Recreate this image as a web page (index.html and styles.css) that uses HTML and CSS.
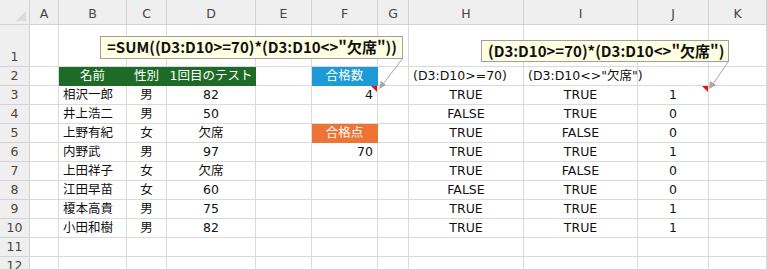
FILE: index.html
```html
<!DOCTYPE html>
<html lang="ja">
<head>
    <meta charset="UTF-8">
    <title>合格数の集計</title>
    <link rel="stylesheet" href="styles.css">
</head>
<body>
    <div class="sheet">
        <!-- column headers -->
        <div class="cell corner"></div>
        <div class="cell col">A</div>
        <div class="cell col">B</div>
        <div class="cell col">C</div>
        <div class="cell col">D</div>
        <div class="cell col">E</div>
        <div class="cell col">F</div>
        <div class="cell col">G</div>
        <div class="cell col">H</div>
        <div class="cell col">I</div>
        <div class="cell col">J</div>
        <div class="cell col">K</div>

        <!-- row 1 -->
        <div class="cell row">1</div>
        <div class="cell"></div><div class="cell"></div><div class="cell"></div><div class="cell"></div>
        <div class="cell"></div><div class="cell"></div><div class="cell"></div><div class="cell"></div>
        <div class="cell"></div><div class="cell"></div><div class="cell"></div>

        <!-- row 2 -->
        <div class="cell row">2</div>
        <div class="cell"></div>
        <div class="cell c green">名前</div>
        <div class="cell c green">性別</div>
        <div class="cell c green">1回目のテスト</div>
        <div class="cell"></div>
        <div class="cell c blue">合格数</div>
        <div class="cell"></div>
        <div class="cell">(D3:D10&gt;=70)</div>
        <div class="cell">(D3:D10&lt;&gt;"欠席")</div>
        <div class="cell"></div>
        <div class="cell"></div>

        <!-- row 3 -->
        <div class="cell row">3</div>
        <div class="cell"></div>
        <div class="cell">相沢一郎</div>
        <div class="cell c">男</div>
        <div class="cell c">82</div>
        <div class="cell"></div>
        <div class="cell r flag">4</div>
        <div class="cell"></div>
        <div class="cell c">TRUE</div>
        <div class="cell c">TRUE</div>
        <div class="cell c flag">1</div>
        <div class="cell"></div>

        <!-- row 4 -->
        <div class="cell row">4</div>
        <div class="cell"></div>
        <div class="cell">井上浩二</div>
        <div class="cell c">男</div>
        <div class="cell c">50</div>
        <div class="cell"></div>
        <div class="cell"></div>
        <div class="cell"></div>
        <div class="cell c">FALSE</div>
        <div class="cell c">TRUE</div>
        <div class="cell c">0</div>
        <div class="cell"></div>

        <!-- row 5 -->
        <div class="cell row">5</div>
        <div class="cell"></div>
        <div class="cell">上野有紀</div>
        <div class="cell c">女</div>
        <div class="cell c">欠席</div>
        <div class="cell"></div>
        <div class="cell c orange">合格点</div>
        <div class="cell"></div>
        <div class="cell c">TRUE</div>
        <div class="cell c">FALSE</div>
        <div class="cell c">0</div>
        <div class="cell"></div>

        <!-- row 6 -->
        <div class="cell row">6</div>
        <div class="cell"></div>
        <div class="cell">内野武</div>
        <div class="cell c">男</div>
        <div class="cell c">97</div>
        <div class="cell"></div>
        <div class="cell r">70</div>
        <div class="cell"></div>
        <div class="cell c">TRUE</div>
        <div class="cell c">TRUE</div>
        <div class="cell c">1</div>
        <div class="cell"></div>

        <!-- row 7 -->
        <div class="cell row">7</div>
        <div class="cell"></div>
        <div class="cell">上田祥子</div>
        <div class="cell c">女</div>
        <div class="cell c">欠席</div>
        <div class="cell"></div>
        <div class="cell"></div>
        <div class="cell"></div>
        <div class="cell c">TRUE</div>
        <div class="cell c">FALSE</div>
        <div class="cell c">0</div>
        <div class="cell"></div>

        <!-- row 8 -->
        <div class="cell row">8</div>
        <div class="cell"></div>
        <div class="cell">江田早苗</div>
        <div class="cell c">女</div>
        <div class="cell c">60</div>
        <div class="cell"></div>
        <div class="cell"></div>
        <div class="cell"></div>
        <div class="cell c">FALSE</div>
        <div class="cell c">TRUE</div>
        <div class="cell c">0</div>
        <div class="cell"></div>

        <!-- row 9 -->
        <div class="cell row">9</div>
        <div class="cell"></div>
        <div class="cell">榎本高貴</div>
        <div class="cell c">男</div>
        <div class="cell c">75</div>
        <div class="cell"></div>
        <div class="cell"></div>
        <div class="cell"></div>
        <div class="cell c">TRUE</div>
        <div class="cell c">TRUE</div>
        <div class="cell c">1</div>
        <div class="cell"></div>

        <!-- row 10 -->
        <div class="cell row">10</div>
        <div class="cell"></div>
        <div class="cell">小田和樹</div>
        <div class="cell c">男</div>
        <div class="cell c">82</div>
        <div class="cell"></div>
        <div class="cell"></div>
        <div class="cell"></div>
        <div class="cell c">TRUE</div>
        <div class="cell c">TRUE</div>
        <div class="cell c">1</div>
        <div class="cell"></div>

        <!-- rows 11, 12 -->
        <div class="cell row">11</div>
        <div class="cell"></div><div class="cell"></div><div class="cell"></div><div class="cell"></div>
        <div class="cell"></div><div class="cell"></div><div class="cell"></div><div class="cell"></div>
        <div class="cell"></div><div class="cell"></div><div class="cell"></div>
        <div class="cell row">12</div>
        <div class="cell"></div><div class="cell"></div><div class="cell"></div><div class="cell"></div>
        <div class="cell"></div><div class="cell"></div><div class="cell"></div><div class="cell"></div>
        <div class="cell"></div><div class="cell"></div><div class="cell"></div>

        <!-- callouts -->
        <div class="note note-sum">=SUM((D3:D10&gt;=70)*(D3:D10&lt;&gt;"欠席"))</div>
        <div class="note note-mul">(D3:D10&gt;=70)*(D3:D10&lt;&gt;"欠席")</div>

        <svg class="leaders" width="767" height="269">
            <line x1="403" y1="58" x2="383" y2="84" stroke="#a6a6a6" stroke-width="1"/>
            <polygon points="379,89 381,81 386,85" fill="#a6a6a6"/>
            <line x1="728" y1="62" x2="713" y2="84" stroke="#a6a6a6" stroke-width="1"/>
            <polygon points="709,89 710,81 716,85" fill="#a6a6a6"/>
        </svg>
    </div>
</body>
</html>
```

FILE: styles.css
```css
body {
    margin: 0;
    background: #fff;
    font-family: "DejaVu Sans", "Noto Sans CJK JP", sans-serif;
}

.sheet {
    position: relative;
    width: 767px;
    height: 269px;
    overflow: hidden;
    display: grid;
    grid-template-columns: 30px 29px 68px 40px 89px 56px 66px 31px 115px 114px 71px 58px;
    grid-template-rows: 25px 42px repeat(11, 19px);
}

.cell {
    position: relative;
    box-sizing: border-box;
    border-right: 1px solid #dadada;
    border-bottom: 1px solid #dadada;
    display: flex;
    align-items: flex-end;
    padding: 0 4px 1px;
    font-size: 12.5px;
    line-height: 17px;
    color: #111;
    white-space: nowrap;
}

.c { justify-content: center; }
.r { justify-content: flex-end; }

/* headers */
.corner, .col, .row {
    background: #efefef;
    border-color: #d2d2d2;
    color: #444;
    justify-content: center;
    font-size: 12.5px;
}

.col {
    padding-bottom: 2px;
}

.corner::after {
    content: "";
    position: absolute;
    right: 3px;
    bottom: 3px;
    border-left: 10px solid transparent;
    border-bottom: 10px solid #dcdcdc;
}

/* coloured heading cells */
.green {
    background: #1e6b28;
    border-color: #1e6b28;
    color: #fff;
}

.blue {
    background: #1c9bd7;
    border-color: #1c9bd7;
    color: #fff;
}

.orange {
    background: #ec7535;
    border-color: #ec7535;
    color: #fff;
}

/* comment marker */
.flag::after {
    content: "";
    position: absolute;
    top: 0;
    right: 0;
    border-left: 6px solid transparent;
    border-top: 6px solid #e81010;
}

/* formula callouts */
.note {
    position: absolute;
    box-sizing: border-box;
    background: #ffffe1;
    border: 1px solid #a0a0a0;
    font-family: "Noto Sans CJK JP", sans-serif;
    font-size: 15px;
    font-weight: bold;
    color: #111;
    line-height: 20px;
    padding: 0 6px;
    white-space: nowrap;
}

.note-sum {
    left: 100px;
    top: 36px;
    width: 303px;
    height: 23px;
}

.note-mul {
    left: 481px;
    top: 40px;
    width: 248px;
    height: 22px;
}

.leaders {
    position: absolute;
    left: 0;
    top: 0;
    pointer-events: none;
}
```
